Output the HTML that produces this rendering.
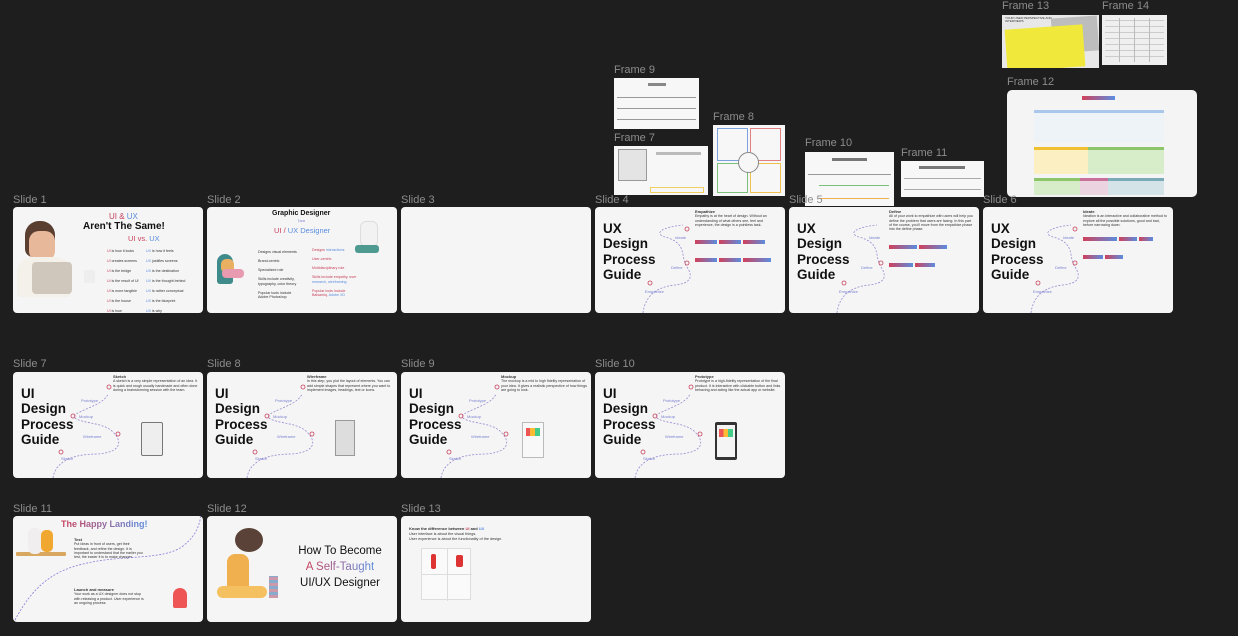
<!DOCTYPE html>
<html><head><meta charset="utf-8"><style>
*{margin:0;padding:0;box-sizing:border-box}
body{width:1238px;height:636px;background:#1e1e1e;position:relative;overflow:hidden;font-family:"Liberation Sans",sans-serif}
.lbl{position:absolute;color:#8c8c8c;font-size:11px;line-height:12px}
.s{position:absolute;width:190px;height:106px;background:#f5f5f5;border-radius:4px;overflow:hidden}
.f{position:absolute;background:#f7f7f7;overflow:hidden}
.big{position:absolute;left:8px;top:14px;font-size:13.5px;font-weight:bold;line-height:15.3px;color:#111}
.tx{position:absolute;font-size:3.6px;line-height:4.3px;color:#333}
.tx b{font-size:4px}
.tag{display:inline-block;height:4px;width:22px;margin:0 2px 2px 0;background:linear-gradient(90deg,#d0405a,#5b8de0)}
svg{position:absolute;left:0;top:0}
.lt{font-size:4px;fill:#7b82d0}
.red{color:#c8405c}.blue{color:#5b8de0}
</style></head><body>

<!-- Frames top -->
<div class="lbl" style="left:1002px;top:0px">Frame 13</div>
<div class="lbl" style="left:1102px;top:0px">Frame 14</div>
<div class="f" style="left:1002px;top:15px;width:97px;height:53px;background:#e8e8e8">
 <div style="position:absolute;left:50px;top:2px;width:46px;height:35px;background:#bdbdbd;transform:rotate(-4deg)"></div>
 <div style="position:absolute;left:4px;top:12px;width:78px;height:42px;background:#f0e83a;transform:rotate(-4deg)"></div>
 <div style="position:absolute;left:3px;top:2px;font-size:3px;color:#333;line-height:3px">YOUR USER PERSPECTIVE AND<br>INTERVIEWS</div>
</div>
<div class="f" style="left:1102px;top:15px;width:65px;height:50px;background:#efefef">
 <div style="position:absolute;left:3px;top:3px;width:59px;height:44px;background:repeating-linear-gradient(90deg,transparent 0 14px,#bbb 14px 15px),repeating-linear-gradient(0deg,transparent 0 5px,#ccc 5px 6px)"></div>
</div>

<div class="lbl" style="left:1007px;top:76px">Frame 12</div>
<div class="f" style="left:1007px;top:90px;width:190px;height:107px;border-radius:5px;background:#f4f4f4">
 <div style="position:absolute;left:75px;top:6px;width:33px;height:4px;background:linear-gradient(90deg,#d0405a,#5b8de0)"></div>
 <div style="position:absolute;left:27px;top:20px;width:130px;height:33px;background:#eef3f8;border-top:3px solid #a8c7ea"></div>
 <div style="position:absolute;left:27px;top:57px;width:54px;height:27px;background:#fcefc2;border-top:3px solid #f0c030"></div>
 <div style="position:absolute;left:81px;top:57px;width:76px;height:27px;background:#d7ecc8;border-top:3px solid #8dc66a"></div>
 <div style="position:absolute;left:27px;top:88px;width:46px;height:17px;background:#d7ecc8;border-top:3px solid #8dc66a"></div>
 <div style="position:absolute;left:73px;top:88px;width:28px;height:17px;background:#ecd3e0;border-top:3px solid #c8709a"></div>
 <div style="position:absolute;left:101px;top:88px;width:56px;height:17px;background:#d3e3e8;border-top:3px solid #78aab8"></div>
</div>

<div class="lbl" style="left:614px;top:64px">Frame 9</div>
<div class="f" style="left:614px;top:78px;width:85px;height:51px">
 <div style="position:absolute;left:34px;top:5px;width:18px;height:3px;background:#888"></div>
 <div style="position:absolute;left:3px;top:19px;width:79px;height:1px;background:#999"></div>
 <div style="position:absolute;left:3px;top:30px;width:79px;height:1px;background:#999"></div>
 <div style="position:absolute;left:3px;top:41px;width:79px;height:1px;background:#999"></div>
</div>
<div class="lbl" style="left:614px;top:132px">Frame 7</div>
<div class="f" style="left:614px;top:146px;width:94px;height:49px">
 <div style="position:absolute;left:4px;top:3px;width:29px;height:32px;background:#e4e4e4;border:1px solid #999"></div>
 <div style="position:absolute;left:36px;top:41px;width:54px;height:6px;border:1px solid #f0d060"></div>
 <div style="position:absolute;left:42px;top:6px;width:45px;height:3px;background:#bbb"></div>
</div>
<div class="lbl" style="left:713px;top:111px">Frame 8</div>
<div class="f" style="left:713px;top:125px;width:72px;height:71px">
 <div style="position:absolute;left:4px;top:3px;width:31px;height:33px;border:1px solid #7aa3e0"></div>
 <div style="position:absolute;left:37px;top:3px;width:31px;height:33px;border:1px solid #e08080"></div>
 <div style="position:absolute;left:4px;top:38px;width:31px;height:30px;border:1px solid #7ac07a"></div>
 <div style="position:absolute;left:37px;top:38px;width:31px;height:30px;border:1px solid #f0c050"></div>
 <div style="position:absolute;left:25px;top:27px;width:21px;height:21px;border:1px solid #888;border-radius:50%;background:#f7f7f7"></div>
</div>
<div class="lbl" style="left:805px;top:137px">Frame 10</div>
<div class="f" style="left:805px;top:152px;width:89px;height:54px">
 <div style="position:absolute;left:27px;top:6px;width:35px;height:3px;background:#777"></div>
 <div style="position:absolute;left:3px;top:22px;width:83px;height:1px;background:#999"></div>
 <div style="position:absolute;left:14px;top:33px;width:70px;height:1px;background:#7ac07a"></div>
 <div style="position:absolute;left:14px;top:46px;width:70px;height:1px;background:#f0b050"></div>
</div>
<div class="lbl" style="left:901px;top:147px">Frame 11</div>
<div class="f" style="left:901px;top:161px;width:83px;height:36px">
 <div style="position:absolute;left:18px;top:5px;width:46px;height:3px;background:#777"></div>
 <div style="position:absolute;left:3px;top:17px;width:77px;height:1px;background:#aaa"></div>
 <div style="position:absolute;left:3px;top:28px;width:77px;height:1px;background:#aaa"></div>
</div>

<!-- Row 1 labels -->
<div class="lbl" style="left:13px;top:194px">Slide 1</div>
<div class="lbl" style="left:207px;top:194px">Slide 2</div>
<div class="lbl" style="left:401px;top:194px">Slide 3</div>
<div class="lbl" style="left:595px;top:194px">Slide 4</div>
<div class="lbl" style="left:789px;top:194px">Slide 5</div>
<div class="lbl" style="left:983px;top:194px">Slide 6</div>

<!-- Slide 1 -->
<div class="s" style="left:13px;top:207px">
 <div style="position:absolute;left:12px;top:14px;width:30px;height:36px;background:#5a3e30;border-radius:14px 14px 8px 8px"></div>
 <div style="position:absolute;left:16px;top:24px;width:26px;height:30px;background:#e8b89a;border-radius:10px"></div>
 <div style="position:absolute;left:4px;top:50px;width:54px;height:40px;background:#f4f0ea;border-radius:16px 16px 4px 4px"></div>
 <div style="position:absolute;left:19px;top:55px;width:40px;height:32px;background:#cfc7bc;border-radius:4px"></div>
 <div style="position:absolute;left:71px;top:63px;width:11px;height:13px;background:#eee;border-radius:2px"></div>
 <div style="position:absolute;left:96px;top:5px;font-size:8px;color:#c8405c">UI &amp; <span class="blue">UX</span></div>
 <div style="position:absolute;left:70px;top:14px;font-size:10px;font-weight:bold;color:#111">Aren't The Same!</div>
 <div style="position:absolute;left:115px;top:27px;font-size:7.5px;color:#c8405c">UI vs. <span class="blue">UX</span></div>
 <div class="tx" style="left:94px;top:39px;line-height:10px;font-size:3.6px"><span class="red">UI</span> is how it looks<br><span class="red">UI</span> creates screens<br><span class="red">UI</span> is the bridge<br><span class="red">UI</span> is the result of UI<br><span class="red">UI</span> is more tangible<br><span class="red">UI</span> is the house<br><span class="red">UI</span> is how</div>
 <div class="tx" style="left:133px;top:39px;line-height:10px;font-size:3.6px"><span class="blue">UX</span> is how it feels<br><span class="blue">UX</span> justifies screens<br><span class="blue">UX</span> is the destination<br><span class="blue">UX</span> is the thought behind<br><span class="blue">UX</span> is rather conceptual<br><span class="blue">UX</span> is the blueprint<br><span class="blue">UX</span> is why</div>
</div>

<!-- Slide 2 -->
<div class="s" style="left:207px;top:207px">
 <div style="position:absolute;left:65px;top:3px;font-size:7px;font-weight:bold;color:#111">Graphic Designer</div>
 <div style="position:absolute;left:91px;top:12px;font-size:5px;color:#8888d0">!==</div>
 <div style="position:absolute;left:67px;top:19px;font-size:7.5px;color:#c8405c">UI / <span class="blue">UX Designer</span></div>
 <div style="position:absolute;left:10px;top:47px;width:16px;height:30px;background:#3f8a8a;border-radius:8px 8px 3px 3px"></div>
 <div style="position:absolute;left:14px;top:52px;width:13px;height:14px;background:#e8b060;border-radius:5px"></div>
 <div style="position:absolute;left:15px;top:62px;width:22px;height:9px;background:#e89ab0;border-radius:4px"></div>
 <div style="position:absolute;left:153px;top:14px;width:18px;height:26px;background:#f2f2f2;border:1px solid #ddd;border-radius:6px"></div>
 <div style="position:absolute;left:148px;top:38px;width:24px;height:8px;background:#4e9a90;border-radius:3px"></div>
 <div class="tx" style="left:51px;top:43px;line-height:4.5px">Designs visual elements<br><br>Brand-centric<br><br>Specialized role<br><br>Skills include creativity,<br>typography, color theory<br><br>Popular tools include<br>Adobe Photoshop</div>
 <div class="tx red" style="left:105px;top:41px;line-height:4.5px">Designs <span class="blue">interactions</span><br><br>User-centric<br><br>Multidisciplinary role<br><br>Skills include empathy, user<br><span class="blue">research, wireframing</span><br><br>Popular tools include<br>Balsamiq, <span class="blue">Adobe XD</span></div>
</div>

<!-- Slide 3 -->
<div class="s" style="left:401px;top:207px"></div>

<!-- Process slide template: UX -->
<div class="s" style="left:595px;top:207px">
 <div class="big">UX<br>Design<br>Process<br>Guide</div>
 <svg width="190" height="106"><path d="M48 106 C50 90 60 80 80 78 C100 76 96 66 92 60 C85 50 93 36 70 30 C58 26 68 20 88 18" fill="none" stroke="#9a8ad0" stroke-width=".8" stroke-dasharray="2 1.5"/>
 <circle cx="55" cy="76" r="2" fill="none" stroke="#c8405c" stroke-width=".8"/><circle cx="92" cy="56" r="2" fill="none" stroke="#c8405c" stroke-width=".8"/><circle cx="92" cy="22" r="2" fill="none" stroke="#c8405c" stroke-width=".8"/>
 <text x="50" y="86" class="lt">Empathize</text><text x="76" y="62" class="lt">Define</text><text x="80" y="32" class="lt">Ideate</text></svg>
 <div class="tx" style="left:100px;top:3px;width:85px"><b>Empathize</b><br>Empathy is at the heart of design. Without an understanding of what others see, feel and experience, the design is a pointless task.</div>
 <div style="position:absolute;left:100px;top:26px;width:85px"><span class="tag"></span><span class="tag"></span><span class="tag"></span><span class="tag"></span><span class="tag"></span><span class="tag" style="width:28px"></span></div>
</div>
<div class="s" style="left:789px;top:207px">
 <div class="big">UX<br>Design<br>Process<br>Guide</div>
 <svg width="190" height="106"><path d="M48 106 C50 90 60 80 80 78 C100 76 96 66 92 60 C85 50 93 36 70 30 C58 26 68 20 88 18" fill="none" stroke="#9a8ad0" stroke-width=".8" stroke-dasharray="2 1.5"/>
 <circle cx="55" cy="76" r="2" fill="none" stroke="#c8405c" stroke-width=".8"/><circle cx="92" cy="56" r="2" fill="none" stroke="#c8405c" stroke-width=".8"/>
 <text x="50" y="86" class="lt">Empathize</text><text x="72" y="62" class="lt">Define</text><text x="80" y="32" class="lt">Ideate</text></svg>
 <div class="tx" style="left:100px;top:3px;width:85px"><b>Define</b><br>All of your work to empathize with users will help you define the problem that users are facing. In this part of the course, you'll move from the empathize phase into the define phase.</div>
 <div style="position:absolute;left:100px;top:31px;width:85px"><span class="tag" style="width:28px"></span><span class="tag" style="width:28px"></span><span class="tag" style="width:24px"></span><span class="tag" style="width:20px"></span></div>
</div>
<div class="s" style="left:983px;top:207px">
 <div class="big">UX<br>Design<br>Process<br>Guide</div>
 <svg width="190" height="106"><path d="M48 106 C50 90 60 80 80 78 C100 76 96 66 92 60 C85 50 93 36 70 30 C58 26 68 20 88 18" fill="none" stroke="#9a8ad0" stroke-width=".8" stroke-dasharray="2 1.5"/>
 <circle cx="55" cy="76" r="2" fill="none" stroke="#c8405c" stroke-width=".8"/><circle cx="92" cy="56" r="2" fill="none" stroke="#c8405c" stroke-width=".8"/><circle cx="92" cy="22" r="2" fill="none" stroke="#c8405c" stroke-width=".8"/>
 <text x="50" y="86" class="lt">Empathize</text><text x="72" y="62" class="lt">Define</text><text x="80" y="32" class="lt">Ideate</text></svg>
 <div class="tx" style="left:100px;top:3px;width:85px"><b>Ideate</b><br>Ideation is an interactive and collaborative method to explore all the possible solutions, good and bad, before narrowing down.</div>
 <div style="position:absolute;left:100px;top:23px;width:85px"><span class="tag" style="width:34px"></span><span class="tag" style="width:18px"></span><span class="tag" style="width:14px"></span><span class="tag" style="width:20px"></span><span class="tag" style="width:18px"></span></div>
</div>

<!-- Row 2 -->
<div class="lbl" style="left:13px;top:358px">Slide 7</div>
<div class="lbl" style="left:207px;top:358px">Slide 8</div>
<div class="lbl" style="left:401px;top:358px">Slide 9</div>
<div class="lbl" style="left:595px;top:358px">Slide 10</div>

<div class="s" style="left:13px;top:372px">
 <div class="big">UI<br>Design<br>Process<br>Guide</div>
 <svg width="190" height="106"><path d="M40 106 C42 92 55 82 85 82 C108 80 110 70 100 60 C90 50 70 52 62 46 C56 40 90 35 95 22" fill="none" stroke="#9a8ad0" stroke-width=".8" stroke-dasharray="2 1.5"/>
 <circle cx="48" cy="80" r="2" fill="none" stroke="#c8405c" stroke-width=".8"/><circle cx="105" cy="62" r="2" fill="none" stroke="#c8405c" stroke-width=".8"/><circle cx="60" cy="44" r="2" fill="none" stroke="#c8405c" stroke-width=".8"/><circle cx="96" cy="15" r="2" fill="none" stroke="#c8405c" stroke-width=".8"/>
 <text x="48" y="88" class="lt">Sketch</text><text x="70" y="66" class="lt">Wireframe</text><text x="66" y="46" class="lt">Mockup</text><text x="68" y="30" class="lt">Prototype</text></svg>
 <div class="tx" style="left:100px;top:3px;width:86px"><b>Sketch</b><br>A sketch is a very simple representation of an idea. It is quick and rough usually handmade and often done during a brainstorming session with the team.</div>
 <div style="position:absolute;left:128px;top:50px;width:22px;height:34px;border:1px solid #777;border-radius:2px;background:#eee"></div>
</div>
<div class="s" style="left:207px;top:372px">
 <div class="big">UI<br>Design<br>Process<br>Guide</div>
 <svg width="190" height="106"><path d="M40 106 C42 92 55 82 85 82 C108 80 110 70 100 60 C90 50 70 52 62 46 C56 40 90 35 95 22" fill="none" stroke="#9a8ad0" stroke-width=".8" stroke-dasharray="2 1.5"/>
 <circle cx="48" cy="80" r="2" fill="none" stroke="#c8405c" stroke-width=".8"/><circle cx="105" cy="62" r="2" fill="none" stroke="#c8405c" stroke-width=".8"/><circle cx="60" cy="44" r="2" fill="none" stroke="#c8405c" stroke-width=".8"/><circle cx="96" cy="15" r="2" fill="none" stroke="#c8405c" stroke-width=".8"/>
 <text x="48" y="88" class="lt">Sketch</text><text x="70" y="66" class="lt">Wireframe</text><text x="66" y="46" class="lt">Mockup</text><text x="68" y="30" class="lt">Prototype</text></svg>
 <div class="tx" style="left:100px;top:3px;width:86px"><b>Wireframe</b><br>In this step, you plot the layout of elements. You can add simple shapes that represent where you want to implement images, headings, text or icons.</div>
 <div style="position:absolute;left:128px;top:48px;width:20px;height:36px;border:1px solid #999;background:#ddd"></div>
</div>
<div class="s" style="left:401px;top:372px">
 <div class="big">UI<br>Design<br>Process<br>Guide</div>
 <svg width="190" height="106"><path d="M40 106 C42 92 55 82 85 82 C108 80 110 70 100 60 C90 50 70 52 62 46 C56 40 90 35 95 22" fill="none" stroke="#9a8ad0" stroke-width=".8" stroke-dasharray="2 1.5"/>
 <circle cx="48" cy="80" r="2" fill="none" stroke="#c8405c" stroke-width=".8"/><circle cx="105" cy="62" r="2" fill="none" stroke="#c8405c" stroke-width=".8"/><circle cx="60" cy="44" r="2" fill="none" stroke="#c8405c" stroke-width=".8"/><circle cx="96" cy="15" r="2" fill="none" stroke="#c8405c" stroke-width=".8"/>
 <text x="48" y="88" class="lt">Sketch</text><text x="70" y="66" class="lt">Wireframe</text><text x="66" y="46" class="lt">Mockup</text><text x="68" y="30" class="lt">Prototype</text></svg>
 <div class="tx" style="left:100px;top:3px;width:86px"><b>Mockup</b><br>The mockup is a mid to high fidelity representation of your idea. It gives a realistic perspective of how things are going to look.</div>
 <div style="position:absolute;left:121px;top:50px;width:22px;height:36px;border:1px solid #bbb;background:#f8f8f8"><div style="margin:5px 3px;height:8px;background:linear-gradient(90deg,#e55 0 30%,#fb3 30% 65%,#4c8 65%)"></div></div>
</div>
<div class="s" style="left:595px;top:372px">
 <div class="big">UI<br>Design<br>Process<br>Guide</div>
 <svg width="190" height="106"><path d="M40 106 C42 92 55 82 85 82 C108 80 110 70 100 60 C90 50 70 52 62 46 C56 40 90 35 95 22" fill="none" stroke="#9a8ad0" stroke-width=".8" stroke-dasharray="2 1.5"/>
 <circle cx="48" cy="80" r="2" fill="none" stroke="#c8405c" stroke-width=".8"/><circle cx="105" cy="62" r="2" fill="none" stroke="#c8405c" stroke-width=".8"/><circle cx="60" cy="44" r="2" fill="none" stroke="#c8405c" stroke-width=".8"/><circle cx="96" cy="15" r="2" fill="none" stroke="#c8405c" stroke-width=".8"/>
 <text x="48" y="88" class="lt">Sketch</text><text x="70" y="66" class="lt">Wireframe</text><text x="66" y="46" class="lt">Mockup</text><text x="68" y="30" class="lt">Prototype</text></svg>
 <div class="tx" style="left:100px;top:3px;width:86px"><b>Prototype</b><br>Prototype is a high-fidelity representation of the final product. It is interactive with clickable button and links behaving and acting like the actual app or website.</div>
 <div style="position:absolute;left:120px;top:50px;width:22px;height:38px;background:#333;border-radius:2px"><div style="position:absolute;left:2px;top:3px;width:18px;height:32px;background:#f4f4f4"><div style="margin:4px 2px;height:8px;background:linear-gradient(90deg,#e55 0 33%,#fb3 33% 66%,#4c8 66%)"></div></div></div>
</div>

<!-- Row 3 -->
<div class="lbl" style="left:13px;top:503px">Slide 11</div>
<div class="lbl" style="left:207px;top:503px">Slide 12</div>
<div class="lbl" style="left:401px;top:503px">Slide 13</div>

<div class="s" style="left:13px;top:516px">
 <div style="position:absolute;left:3px;top:36px;width:50px;height:4px;background:#d9a860;border-radius:1px"></div>
 <div style="position:absolute;left:15px;top:12px;width:14px;height:26px;background:#f0eeee;border-radius:6px"></div>
 <div style="position:absolute;left:28px;top:14px;width:12px;height:22px;background:#f0a830;border-radius:5px"></div>
 <div style="position:absolute;left:48px;top:3px;font-size:9px;font-weight:bold;background:linear-gradient(90deg,#c8405c,#5b8de0);-webkit-background-clip:text;color:transparent">The Happy Landing!</div>
 <div class="tx" style="left:61px;top:22px;width:70px"><b>Test</b><br>Put ideas in front of users, get their feedback, and refine the design. It is important to understand that the earlier you test, the easier it is to make changes.</div>
 <div class="tx" style="left:61px;top:72px;width:70px"><b>Launch and measure</b><br>Your work as a UX designer does not stop with releasing a product. User experience is an ongoing process.</div>
 <svg width="190" height="106"><path d="M2 104 C20 70 40 55 70 48 C110 38 150 45 170 30 C185 18 186 8 188 0" fill="none" stroke="#8a7ad8" stroke-width=".8" stroke-dasharray="2 1.5"/></svg>
 <div style="position:absolute;left:160px;top:72px;width:14px;height:20px;background:#e55;border-radius:7px 7px 2px 2px"></div>
</div>
<div class="s" style="left:207px;top:516px">
 <div style="position:absolute;left:28px;top:12px;width:28px;height:24px;background:#5a4238;border-radius:50%"></div>
 <div style="position:absolute;left:20px;top:38px;width:22px;height:40px;background:#f0b050;border-radius:8px"></div>
 <div style="position:absolute;left:10px;top:70px;width:50px;height:12px;background:#f4c060;border-radius:6px"></div>
 <div style="position:absolute;left:62px;top:60px;width:9px;height:22px;background:repeating-linear-gradient(0deg,#c9a 0 3px,#8ac 3px 6px)"></div>
 <div style="position:absolute;left:80px;top:27px;width:106px;text-align:center;font-size:11.5px;line-height:16px;color:#111">How To Become<br><span style="background:linear-gradient(90deg,#c8405c,#5b8de0);-webkit-background-clip:text;color:transparent">A Self-Taught</span><br>UI/UX Designer</div>
</div>
<div class="s" style="left:401px;top:516px">
 <div class="tx" style="left:8px;top:10px;font-size:3.8px;line-height:5px"><b>Know the difference between <span class="red">UI</span> and <span class="blue">UX</span></b><br>User interface is about the visual things.<br>User experience is about the functionality of the design.</div>
 <div style="position:absolute;left:20px;top:32px;width:50px;height:52px;border:1px solid #ddd;background:#fafafa">
  <div style="position:absolute;left:9px;top:5px;width:5px;height:15px;background:#d33;border-radius:2px"></div>
  <div style="position:absolute;left:34px;top:6px;width:7px;height:12px;background:#d33;border-radius:2px"></div>
  <div style="position:absolute;left:0;top:25px;width:50px;height:1px;background:#ddd"></div>
  <div style="position:absolute;left:25px;top:0;width:1px;height:52px;background:#ddd"></div>
 </div>
</div>
</body></html>
